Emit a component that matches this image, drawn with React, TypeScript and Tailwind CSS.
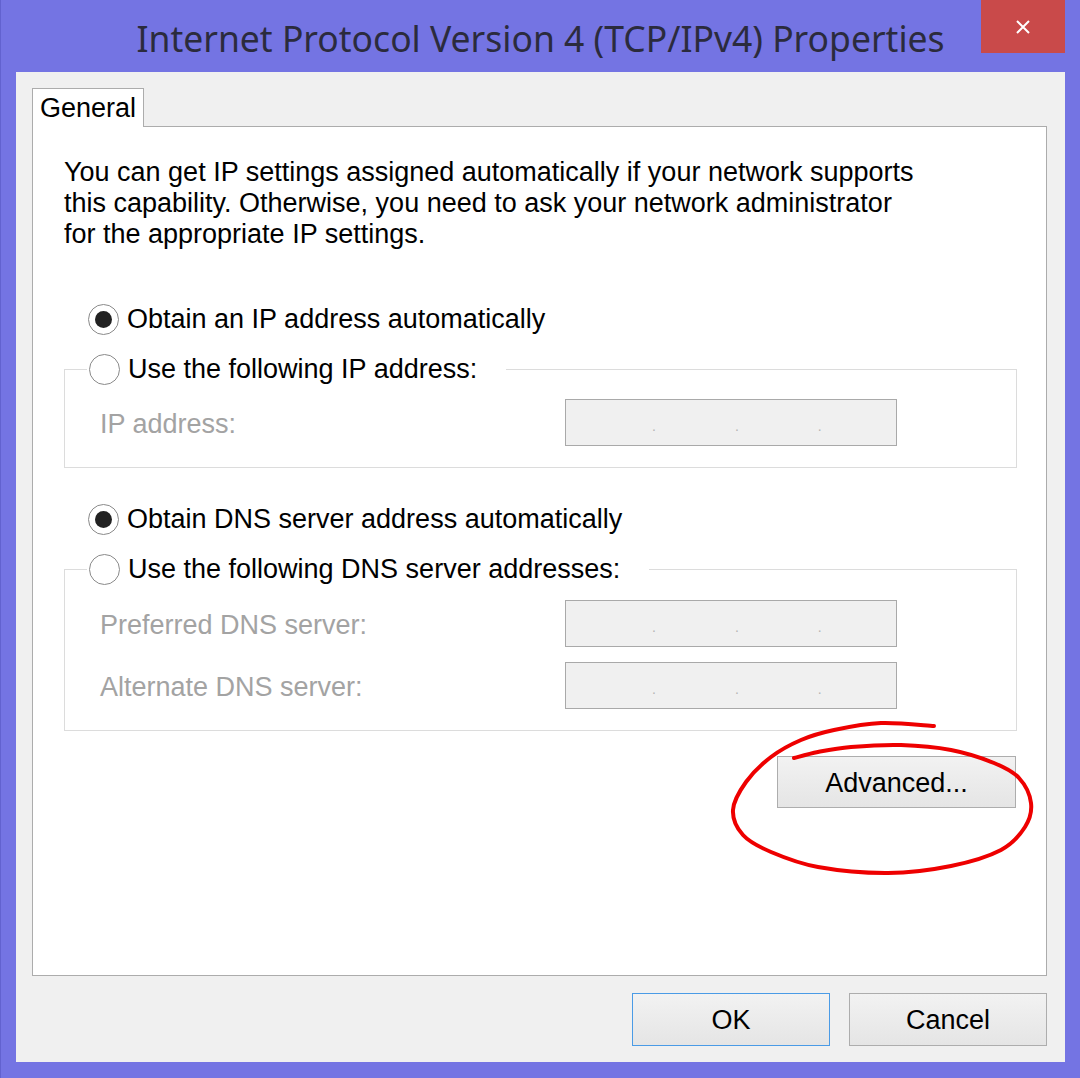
import React from 'react';

// Titik-titik untuk coretan merah di sekitar tombol Advanced
const titikCoretan: [number, number][] = [
  [933, 726], [880, 723], [833, 730], [800, 740], [770, 757], [745, 782],
  [732, 810], [742, 835], [770, 852], [817, 867], [887, 873], [950, 866],
  [1000, 850], [1024, 827], [1030, 803], [1018, 778], [993, 763], [950, 750],
  [900, 745], [850, 747], [817, 752], [793, 758],
];

function jalurHalus(pts: [number, number][]) {
  let d = `M${pts[0][0]},${pts[0][1]}`;
  for (let i = 0; i < pts.length - 1; i++) {
    const p0 = pts[i - 1] || pts[i];
    const p1 = pts[i];
    const p2 = pts[i + 1];
    const p3 = pts[i + 2] || p2;
    const c1x = p1[0] + (p2[0] - p0[0]) / 6;
    const c1y = p1[1] + (p2[1] - p0[1]) / 6;
    const c2x = p2[0] - (p3[0] - p1[0]) / 6;
    const c2y = p2[1] - (p3[1] - p1[1]) / 6;
    d += ` C${c1x},${c1y} ${c2x},${c2y} ${p2[0]},${p2[1]}`;
  }
  return d;
}

function Radio({ checked, label }: { checked?: boolean; label: string }) {
  return (
    <div className="flex items-center h-[50px] bg-white">
      <span className="w-[31px] h-[31px] rounded-full border border-[#8a8a8a] bg-white flex items-center justify-center">
        {checked && <span className="w-[17px] h-[17px] rounded-full bg-[#222222]" />}
      </span>
      <span className="ml-[8px] text-[27px] text-black">{label}</span>
    </div>
  );
}

function KotakIP() {
  return (
    <div className="w-[332px] h-[47px] border border-[#a9a9a9] bg-[#f0f0f0] flex items-center pt-[8px] text-[14px] text-[#b5b5b5]">
      <span className="w-[86px]" />
      <span>.</span>
      <span className="w-[79px]" />
      <span>.</span>
      <span className="w-[79px]" />
      <span>.</span>
    </div>
  );
}

function BarisIP({ label }: { label: string }) {
  return (
    <div className="flex items-center h-[47px]">
      <span className="w-[500px] pl-[35px] pt-[3px] text-[27px] text-[#a3a3a3]">{label}</span>
      <KotakIP />
    </div>
  );
}

function Tombol({ children, fokus, className }: { children: React.ReactNode; fokus?: boolean; className?: string }) {
  return (
    <button
      className={`flex items-center justify-center pt-[2px] text-[27px] text-black bg-gradient-to-b from-[#f2f2f2] to-[#e5e5e5] border ${
        fokus ? 'border-[#4a9be6]' : 'border-[#adadad]'
      } ${className || ''}`}
    >
      {children}
    </button>
  );
}

export default function App() {
  return (
    <div
      className="relative w-[1080px] h-[1078px] bg-[#7474e3] border-l border-[#6262cf] flex flex-col"
      style={{ fontFamily: '"Liberation Sans", Arial, sans-serif' }}
    >
      {/* Bilah judul */}
      <div className="relative h-[72px] shrink-0">
        <div
          className="w-full text-center pt-[12px] text-[35.5px] leading-[52px] text-[#2b2b3d]"
          style={{ fontFamily: '"Noto Sans", "Open Sans", sans-serif' }}
        >
          Internet Protocol Version 4 (TCP/IPv4) Properties
        </div>
        <button className="absolute right-[15px] top-0 w-[84px] h-[53px] bg-[#c94a4a] flex items-center justify-center">
          <svg width="14" height="14" viewBox="0 0 14 14">
            <path d="M1 1 L13 13 M13 1 L1 13" stroke="#ffffff" strokeWidth="2" />
          </svg>
        </button>
      </div>

      {/* Area isi */}
      <div className="mx-[15px] h-[990px] bg-[#f0f0f0] pl-[16px] pr-[18px] pt-[16px]">
        {/* Tab */}
        <div className="flex">
          <div className="relative z-10 -mb-px w-[112px] h-[39px] bg-white border border-b-0 border-[#acacac] pl-[7px] text-[27px] leading-[38px] text-black">
            General
          </div>
        </div>

        {/* Panel tab */}
        <div className="h-[850px] bg-white border border-[#acacac] pl-[31px] pr-[29px] pt-[30px]">
          <p className="text-[27px] leading-[31px] text-black">
            You can get IP settings assigned automatically if your network supports
            <br />
            this capability. Otherwise, you need to ask your network administrator
            <br />
            for the appropriate IP settings.
          </p>

          <div className="mt-[44px] pl-[24px] flex">
            <Radio checked label="Obtain an IP address automatically" />
          </div>

          <fieldset className="border border-[#dcdcdc] pb-[21px]">
            <legend className="ml-[22px] pl-[2px] pr-[29px] bg-white">
              <Radio label="Use the following IP address:" />
            </legend>
            <div className="pt-[5px]">
              <BarisIP label="IP address:" />
            </div>
          </fieldset>

          <div className="mt-[26px] pl-[24px] flex">
            <Radio checked label="Obtain DNS server address automatically" />
          </div>

          <fieldset className="border border-[#dcdcdc] pb-[21px]">
            <legend className="ml-[22px] pl-[2px] pr-[29px] bg-white">
              <Radio label="Use the following DNS server addresses:" />
            </legend>
            <div className="pt-[6px] flex flex-col gap-[15px]">
              <BarisIP label="Preferred DNS server:" />
              <BarisIP label="Alternate DNS server:" />
            </div>
          </fieldset>

          <div className="mt-[25px] flex justify-end">
            <Tombol className="w-[239px] h-[52px] mr-[1px]">Advanced...</Tombol>
          </div>
        </div>

        {/* Tombol bawah */}
        <div className="mt-[17px] flex justify-end gap-[19px]">
          <Tombol fokus className="w-[198px] h-[53px]">OK</Tombol>
          <Tombol className="w-[198px] h-[53px]">Cancel</Tombol>
        </div>
      </div>

      {/* Coretan merah */}
      <svg className="absolute inset-0 pointer-events-none" width="1080" height="1078">
        <path d={jalurHalus(titikCoretan)} fill="none" stroke="#ee0000" strokeWidth="4" strokeLinecap="round" strokeLinejoin="round" />
      </svg>
    </div>
  );
}
